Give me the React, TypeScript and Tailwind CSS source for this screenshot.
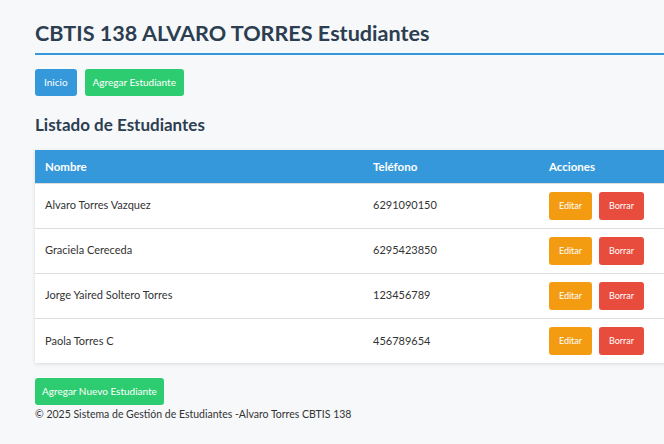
import React from "react"

const students = [
  { nombre: "Alvaro Torres Vazquez", telefono: "6291090150" },
  { nombre: "Graciela Cereceda", telefono: "6295423850" },
  { nombre: "Jorge Yaired Soltero Torres", telefono: "123456789" },
  { nombre: "Paola Torres C", telefono: "456789654" },
]

export default function App() {
  return (
    <div
      className="min-h-screen bg-[#f7f8fa] overflow-hidden text-[#333]"
      style={{ fontFamily: "Lato, 'Open Sans', sans-serif" }}
    >
      <div className="ml-[35px] w-[680px] pt-[18px]">
        {/* Header */}
        <h1 className="text-[21.6px] font-bold text-[#2c3e50] leading-[30px] pb-[5px] border-b-2 border-[#3498db]">
          CBTIS 138 ALVARO TORRES Estudiantes
        </h1>

        <div className="flex gap-2 mt-[14px]">
          <button className="h-[27px] px-[9px] rounded-[3px] bg-[#3498db] text-white text-[10px]">Inicio</button>
          <button className="h-[27px] px-[8px] rounded-[3px] bg-[#2ecc71] text-white text-[10px]">
            Agregar Estudiante
          </button>
        </div>

        <h2 className="mt-[17px] text-[17px] font-bold text-[#2c3e50] leading-[24px]">Listado de Estudiantes</h2>

        {/* Table */}
        <table className="mt-[13px] w-full bg-white border-collapse shadow-[0_1px_4px_rgba(0,0,0,0.12)]">
          <thead>
            <tr className="bg-[#3498db] text-white text-[11.5px] font-bold text-left h-[33px]">
              <th className="pl-[10px] w-[338px]">Nombre</th>
              <th className="w-[176px]">Teléfono</th>
              <th>Acciones</th>
            </tr>
          </thead>
          <tbody>
            {students.map((s) => (
              <tr key={s.nombre} className="border-t border-[#ddd] text-[11px] h-[45px]">
                <td className="pl-[10px]">{s.nombre}</td>
                <td>{s.telefono}</td>
                <td>
                  <div className="flex gap-[7px]">
                    <button className="h-[28px] w-[43px] rounded-[3px] bg-[#f39c12] text-white text-[9px]">Editar</button>
                    <button className="h-[28px] w-[45px] rounded-[3px] bg-[#e74c3c] text-white text-[9px]">Borrar</button>
                  </div>
                </td>
              </tr>
            ))}
          </tbody>
        </table>

        <button className="mt-[15px] h-[27px] px-[7px] rounded-[3px] bg-[#2ecc71] text-white text-[10px]">
          Agregar Nuevo Estudiante
        </button>

        <footer className="mt-[2px] text-[10.5px] text-[#333]">
          © 2025 Sistema de Gestión de Estudiantes -Alvaro Torres CBTIS 138
        </footer>
      </div>
    </div>
  )
}
